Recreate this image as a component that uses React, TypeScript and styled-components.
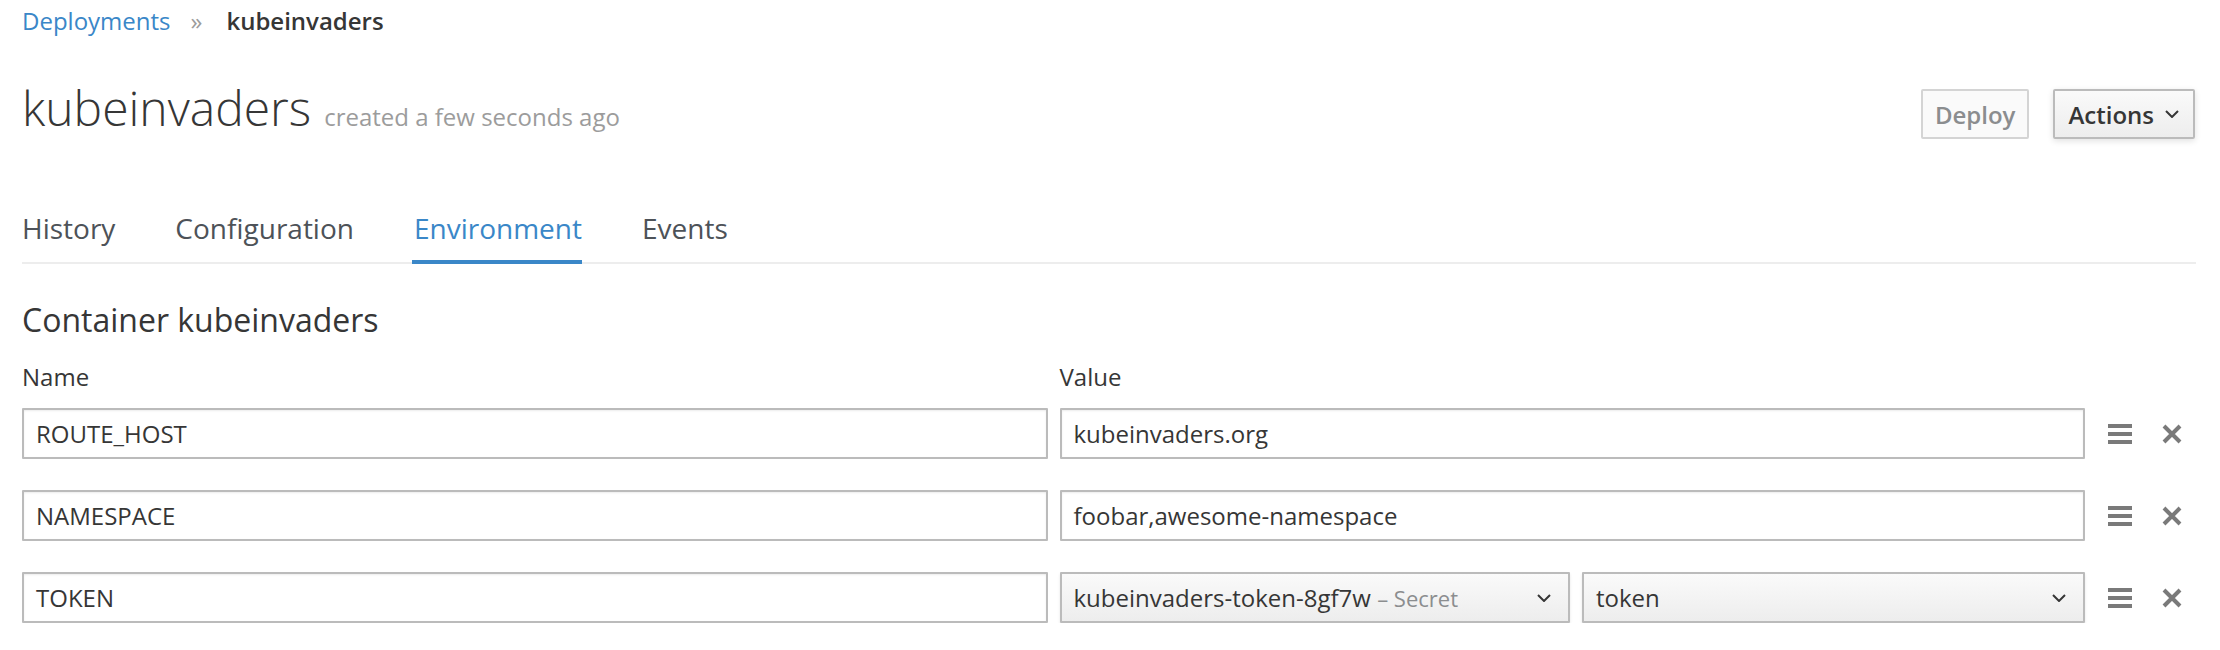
import * as React from "react";
import styled, { createGlobalStyle } from "styled-components";

const GlobalStyle = createGlobalStyle`
  html, body {
    margin: 0;
    padding: 0;
    background: #fff;
  }
  body {
    font-family: "Open Sans", "Liberation Sans", sans-serif;
    color: #363636;
  }
  * {
    box-sizing: border-box;
  }
`;

const Page = styled.div`
  width: 2220px;
  padding: 0 24px 0 22px;
`;

const Breadcrumb = styled.div`
  display: flex;
  align-items: center;
  height: 42px;
  line-height: 42px;
  font-size: 24px;
`;

const CrumbLink = styled.a`
  color: #3a87c8;
  text-decoration: none;
`;

const CrumbSep = styled.span`
  color: #9c9c9c;
  margin: 0 24px 0 20px;
`;

const CrumbCurrent = styled.span`
  font-weight: 600;
  color: #363636;
`;

const HeaderRow = styled.div`
  display: flex;
  align-items: flex-start;
  justify-content: space-between;
  margin-top: 33px;
  height: 66px;
`;

const Title = styled.h1`
  margin: 0;
  font-size: 48px;
  font-weight: 300;
  line-height: 66px;
  color: #363636;
`;

const Subtitle = styled.span`
  font-size: 24px;
  font-weight: 400;
  color: #9c9c9c;
  margin-left: 13px;
`;

const ButtonGroup = styled.div`
  display: flex;
  gap: 24px;
  margin-top: 14px;
  margin-right: 1px;
`;

const Button = styled.button<{ disabled?: boolean }>`
  display: flex;
  align-items: center;
  gap: 11px;
  height: 50px;
  padding: 0 14px 0 13px;
  font-family: "Open Sans", "Liberation Sans", sans-serif;
  font-size: 24px;
  font-weight: 600;
  border-radius: 2px;
  border: 2px solid ${(p) => (p.disabled ? "#d4d4d4" : "#bbb")};
  color: ${(p) => (p.disabled ? "#8b8d8f" : "#363636")};
  background: ${(p) =>
    p.disabled ? "#fafafa" : "linear-gradient(to bottom, #fafafa 0, #ededed 100%)"};
  box-shadow: ${(p) => (p.disabled ? "none" : "0 2px 6px rgba(0, 0, 0, 0.12)")};
  ${(p) => p.disabled && "padding: 0 12px;"}
`;

const Tabs = styled.ul`
  display: flex;
  gap: 60px;
  list-style: none;
  margin: 68px 0 0;
  padding: 0;
  border-bottom: 2px solid #ededed;
`;

const Tab = styled.li<{ active?: boolean }>`
  position: relative;
  font-size: 28px;
  line-height: 38px;
  padding-bottom: 15px;
  color: ${(p) => (p.active ? "#3a87c8" : "#4d5258")};
  &::after {
    content: "";
    display: ${(p) => (p.active ? "block" : "none")};
    position: absolute;
    left: -2px;
    right: 0;
    bottom: -2px;
    height: 4px;
    background: #3a87c8;
  }
`;

const SectionTitle = styled.h3`
  margin: 34px 0 0;
  font-size: 32px;
  font-weight: 400;
  line-height: 43px;
  color: #363636;
`;

const Grid = styled.div`
  display: flex;
  flex-direction: column;
  gap: 31px;
`;

const LabelRow = styled.div`
  display: flex;
  gap: 12px;
  margin-top: 19px;
  margin-bottom: 15px;
  padding-right: 111px;
  font-size: 24px;
  line-height: 33px;
`;

const Label = styled.div`
  flex: 1;
`;

const Row = styled.div`
  display: flex;
  align-items: center;
  gap: 12px;
`;

const Cell = styled.div`
  flex: 1;
  display: flex;
  gap: 12px;
  min-width: 0;
`;

const Input = styled.div<{ grow?: number }>`
  flex: ${(p) => p.grow ?? 1} 1 0;
  height: 51px;
  display: flex;
  align-items: center;
  padding: 0 12px;
  border: 2px solid #bbb;
  border-radius: 1px;
  box-shadow: inset 0 1px 2px rgba(3, 3, 3, 0.08);
  font-size: 24px;
  color: #363636;
  white-space: nowrap;
  overflow: hidden;
`;

const Select = styled(Input)`
  justify-content: space-between;
  padding: 0 17px 0 12px;
  background: linear-gradient(to bottom, #fafafa 0, #ededed 100%);
  box-shadow: 0 2px 3px rgba(3, 3, 3, 0.1);
`;

const Muted = styled.span`
  font-size: 22px;
  color: #8b8d8f;
`;

const RowActions = styled.div`
  width: 99px;
  display: flex;
  align-items: center;
  gap: 30px;
  padding-left: 11px;
  color: #7a7a7a;
`;

const Chevron = ({ size = 14 }: { size?: number }) => (
  <svg width={size} height={size / 2 + 1} viewBox="0 0 14 8" fill="none">
    <polyline points="1,1 7,7 13,1" stroke="#363636" strokeWidth="2" />
  </svg>
);

const DragIcon = () => (
  <svg width="24" height="20" viewBox="0 0 24 20">
    <rect x="0" y="0" width="24" height="4" fill="#7a7a7a" />
    <rect x="0" y="8" width="24" height="4" fill="#7a7a7a" />
    <rect x="0" y="16" width="24" height="4" fill="#7a7a7a" />
  </svg>
);

const RemoveIcon = () => (
  <svg width="20" height="20" viewBox="0 0 20 20">
    <path d="M2 2 L18 18 M18 2 L2 18" stroke="#7a7a7a" strokeWidth="4" />
  </svg>
);

const envRows = [
  { name: "ROUTE_HOST", value: "kubeinvaders.org" },
  { name: "NAMESPACE", value: "foobar,awesome-namespace" },
];

export default function App() {
  return (
    <Page>
      <GlobalStyle />
      <Breadcrumb>
        <CrumbLink href="#">Deployments</CrumbLink>
        <CrumbSep>»</CrumbSep>
        <CrumbCurrent>kubeinvaders</CrumbCurrent>
      </Breadcrumb>

      <HeaderRow>
        <Title>
          kubeinvaders
          <Subtitle>created a few seconds ago</Subtitle>
        </Title>
        <ButtonGroup>
          <Button disabled>Deploy</Button>
          <Button>
            Actions
            <Chevron />
          </Button>
        </ButtonGroup>
      </HeaderRow>

      <Tabs>
        <Tab>History</Tab>
        <Tab>Configuration</Tab>
        <Tab active>Environment</Tab>
        <Tab>Events</Tab>
      </Tabs>

      <SectionTitle>Container kubeinvaders</SectionTitle>

      <LabelRow>
        <Label>Name</Label>
        <Label>Value</Label>
      </LabelRow>

      <Grid>
        {envRows.map((r) => (
          <Row key={r.name}>
            <Cell>
              <Input>{r.name}</Input>
            </Cell>
            <Cell>
              <Input>{r.value}</Input>
            </Cell>
            <RowActions>
              <DragIcon />
              <RemoveIcon />
            </RowActions>
          </Row>
        ))}
        <Row>
          <Cell>
            <Input>TOKEN</Input>
          </Cell>
          <Cell>
            <Select grow={510}>
              <span>
                kubeinvaders-token-8gf7w <Muted>– Secret</Muted>
              </span>
              <Chevron />
            </Select>
            <Select grow={502}>
              <span>token</span>
              <Chevron />
            </Select>
          </Cell>
          <RowActions>
            <DragIcon />
            <RemoveIcon />
          </RowActions>
        </Row>
      </Grid>
    </Page>
  );
}
